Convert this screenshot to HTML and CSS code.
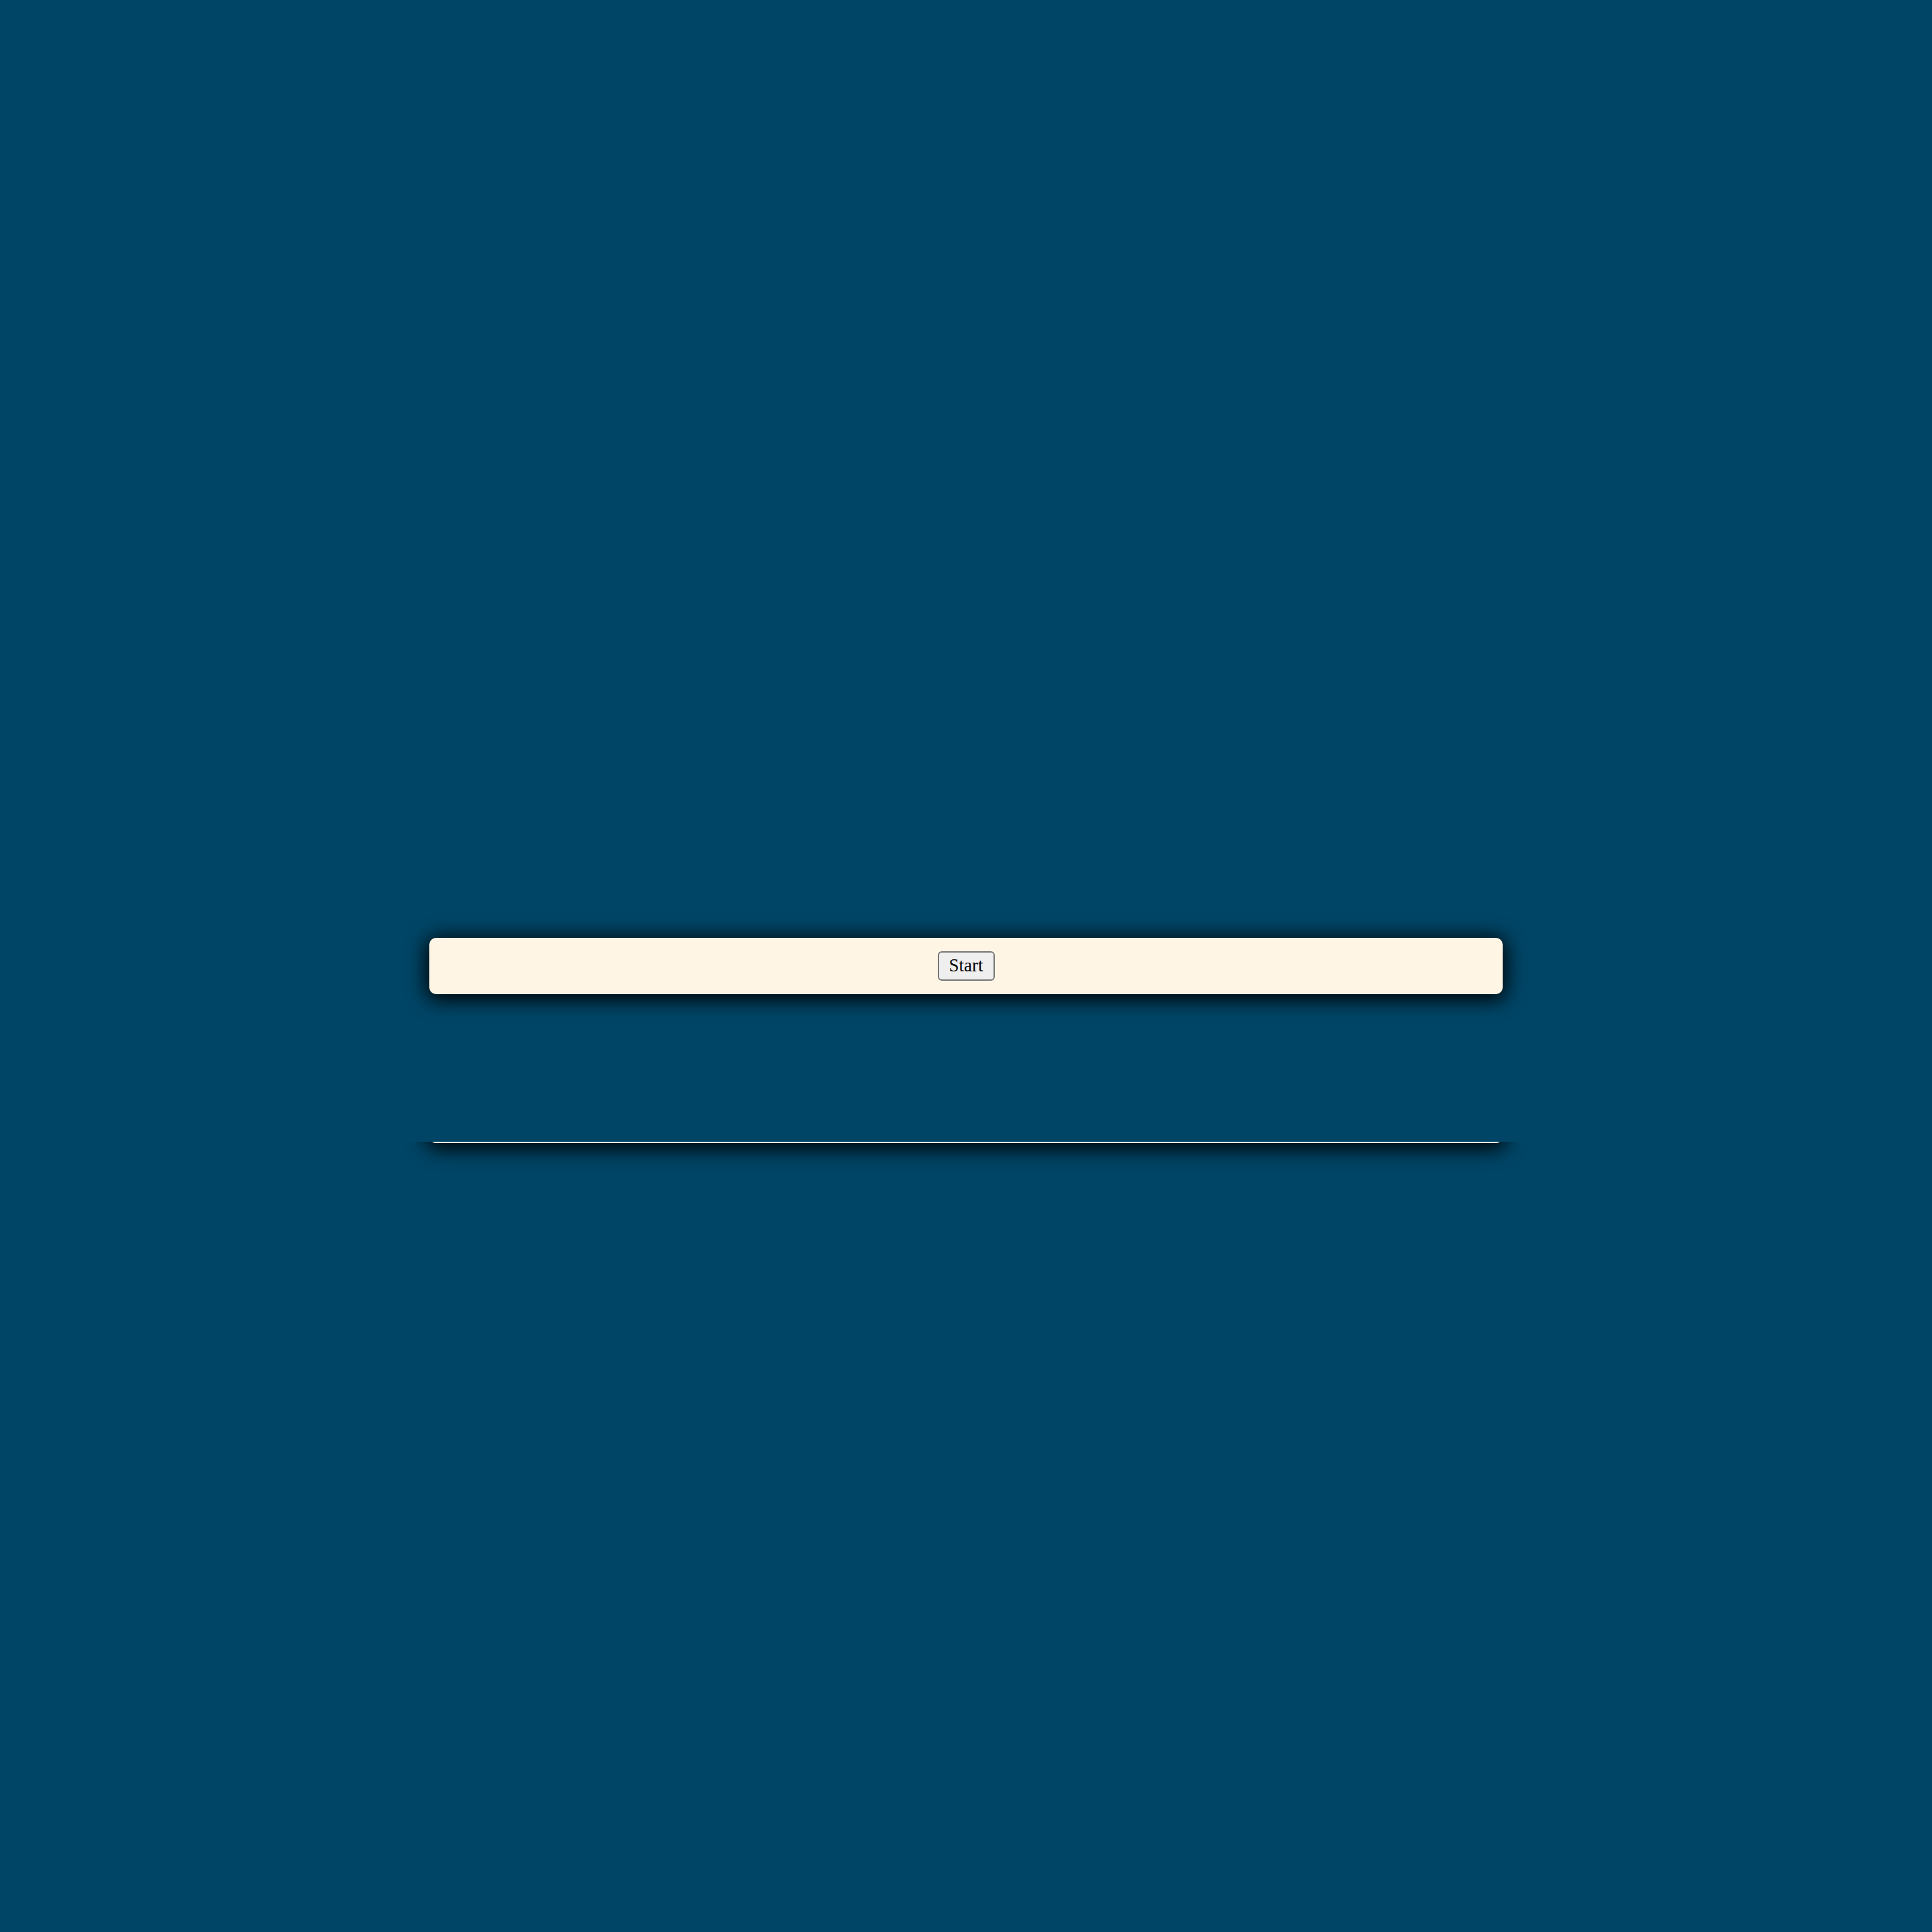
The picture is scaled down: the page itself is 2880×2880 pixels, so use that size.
FILE: index.html
```html
<!DOCTYPE html>
<html>
<head>
<meta charset="utf-8">
<link rel="stylesheet" href="styles.css">
</head>
<body>
<div class="page">
  <div class="panel">
    <button class="start">Start</button>
  </div>
  <div class="track">
    <div class="track-card"></div>
  </div>
</div>
</body>
</html>
```
FILE: styles.css
```css
html, body {
  margin: 0;
  padding: 0;
  background: #004566;
}
.page {
  width: 1600px;
  margin: 0 auto;
  padding-top: 1398px;
  display: flex;
  flex-direction: column;
}
.panel {
  height: 84px;
  box-sizing: border-box;
  background: #fff5e4;
  border-radius: 10px;
  box-shadow: 0 4px 30px 4px rgba(0, 0, 0, 1);
  display: flex;
  justify-content: center;
  align-items: center;
}
.start {
  font-family: "Liberation Serif", serif;
  font-size: 27px;
  line-height: 1.15;
  color: #000;
  background: #efefef;
  border: 2px solid #767676;
  border-radius: 6px;
  padding: 0 15px;
  height: 44px;
  box-sizing: border-box;
}
.track {
  margin: 220px -60px 0;
  padding: 0 60px;
  height: 90px;
  overflow: hidden;
}
.track-card {
  margin-top: -82px;
  height: 84px;
  background: #fff5e4;
  border-radius: 10px;
  box-shadow: 0 4px 30px 4px rgba(0, 0, 0, 1);
}
```
